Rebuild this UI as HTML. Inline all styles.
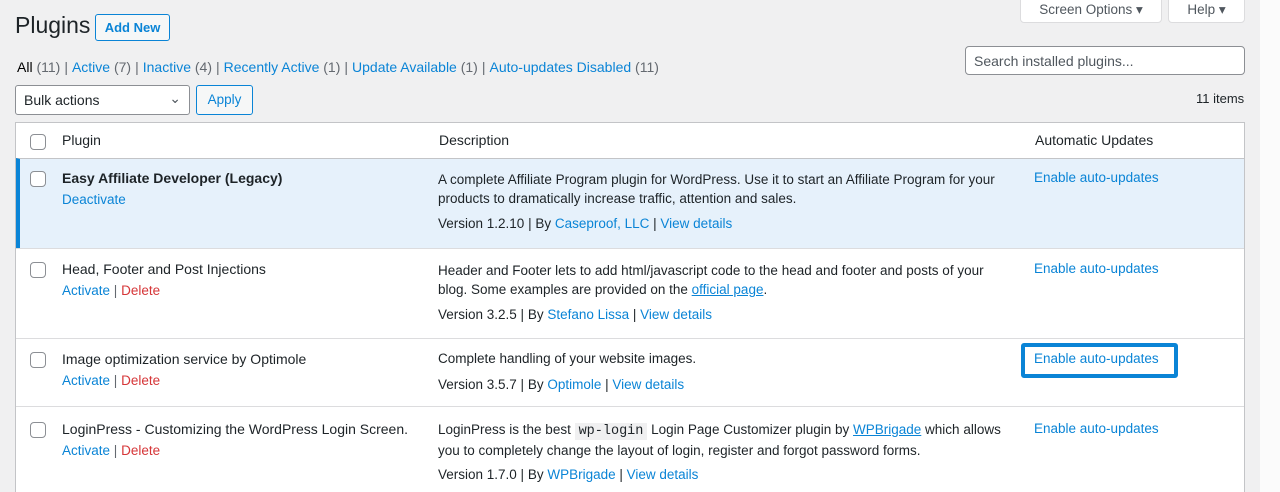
<!DOCTYPE html>
<html style="overflow:hidden"><head><meta charset="utf-8"><style>
*{box-sizing:border-box;margin:0;padding:0}
html,body{width:1280px;height:492px;overflow:hidden}
body{background:#f0f0f1;font-family:"Liberation Sans",sans-serif;font-size:13.5px;color:#1d2327;position:relative}
.a{position:absolute;white-space:nowrap}
.b{color:#0a84d6}
.g{color:#646970}
.r{color:#d63638}
.rightstrip{position:absolute;left:1260px;top:0;width:20px;height:492px;background:#fbfbfb}
.btn{position:absolute;border:1px solid #0a84d6;border-radius:3px;color:#0a84d6;background:#f6f7f7;font-size:13.5px;text-align:center}
.tb{position:absolute;left:15px;top:122px;width:1230px;height:380px;background:#fff;border:1px solid #c3c4c7}
.row{position:absolute;left:0;width:1228px;border-top:1px solid #dcdcde}
.cb{position:absolute;width:16px;height:16px;border:1px solid #8c8f94;border-radius:4px;background:#fff}
.f span.s{color:#646970;margin:0 4px}
</style></head><body>
<div class="rightstrip"></div>
<div class="a" style="left:15px;top:12px;font-size:23px;color:#1d2327">Plugins</div>
<div class="btn" style="left:95px;top:14px;width:75px;height:27px;line-height:25px;font-weight:bold;font-size:13px">Add New</div>
<div class="a" style="left:1020px;top:-6px;width:142px;height:29px;background:#fff;border:1px solid #dcdcde;border-radius:0 0 4px 4px;text-align:center;line-height:28px;color:#50575e;padding-top:1px">Screen Options ▾</div>
<div class="a" style="left:1168px;top:-6px;width:77px;height:29px;background:#fff;border:1px solid #dcdcde;border-radius:0 0 4px 4px;text-align:center;line-height:28px;color:#50575e;padding-top:1px">Help ▾</div>
<div class="a f" style="left:17px;top:59px;font-size:14px"><span style="color:#000">All</span> <span class="g">(11)</span><span class="s">|</span><span class="b">Active</span> <span class="g">(7)</span><span class="s">|</span><span class="b">Inactive</span> <span class="g">(4)</span><span class="s">|</span><span class="b">Recently Active</span> <span class="g">(1)</span><span class="s">|</span><span class="b">Update Available</span> <span class="g">(1)</span><span class="s">|</span><span class="b">Auto-updates Disabled</span> <span class="g">(11)</span></div>
<div class="a" style="left:965px;top:46px;width:280px;height:29px;background:#fff;border:1px solid #8c8f94;border-radius:4px;padding:6px 8px;color:#50575e;font-size:14px">Search installed plugins...</div>
<div class="a" style="left:15px;top:85px;width:175px;height:30px;background:#fff;border:1px solid #8c8f94;border-radius:3px;padding:6px 8px;font-size:14px">Bulk actions<span style="position:absolute;right:8px;top:4px;color:#50575e">⌄</span></div>
<div class="btn" style="left:196px;top:85px;width:57px;height:30px;line-height:28px">Apply</div>
<div class="a" style="left:1196px;top:91px;color:#1d2327;font-size:13px">11 items</div>
<div class="tb">
 <div class="cb" style="left:14px;top:11px"></div>
 <div class="a" style="left:46px;top:9px;font-size:14px">Plugin</div>
 <div class="a" style="left:423px;top:9px;font-size:14px">Description</div>
 <div class="a" style="left:1019px;top:9px;font-size:14px">Automatic Updates</div>
 <div class="row" style="top:35px;height:90px;background:#e6f1fb;border-left:4px solid #0a84d6;border-top-color:#c3c4c7">
  <div class="cb" style="left:10px;top:12px"></div>
  <div class="a" style="left:42px;top:11px;font-weight:bold;font-size:14px">Easy Affiliate Developer (Legacy)</div>
  <div class="a b" style="left:42px;top:33px">Deactivate</div>
  <div class="a" style="left:418px;top:11px;line-height:19px">A complete Affiliate Program plugin for WordPress. Use it to start an Affiliate Program for your<br>products to dramatically increase traffic, attention and sales.</div>
  <div class="a" style="left:418px;top:57px">Version 1.2.10 | By <span class="b">Caseproof, LLC</span> | <span class="b">View details</span></div>
  <div class="a b" style="left:1014px;top:11px">Enable auto-updates</div>
 </div>
 <div class="row" style="top:125px;height:90px">
  <div class="cb" style="left:14px;top:13px"></div>
  <div class="a" style="left:46px;top:12px;font-size:14px">Head, Footer and Post Injections</div>
  <div class="a" style="left:46px;top:34px"><span class="b">Activate</span> <span class="g">|</span> <span class="r">Delete</span></div>
  <div class="a" style="left:422px;top:12px;line-height:19px">Header and Footer lets to add html/javascript code to the head and footer and posts of your<br>blog. Some examples are provided on the <span class="b" style="text-decoration:underline">official page</span>.</div>
  <div class="a" style="left:422px;top:58px">Version 3.2.5 | By <span class="b">Stefano Lissa</span> | <span class="b">View details</span></div>
  <div class="a b" style="left:1018px;top:12px">Enable auto-updates</div>
 </div>
 <div class="row" style="top:215px;height:68px">
  <div class="cb" style="left:14px;top:13px"></div>
  <div class="a" style="left:46px;top:12px;font-size:14px">Image optimization service by Optimole</div>
  <div class="a" style="left:46px;top:34px"><span class="b">Activate</span> <span class="g">|</span> <span class="r">Delete</span></div>
  <div class="a" style="left:422px;top:12px">Complete handling of your website images.</div>
  <div class="a" style="left:422px;top:38px">Version 3.5.7 | By <span class="b">Optimole</span> | <span class="b">View details</span></div>
  <div class="a b" style="left:1005px;top:4px;width:157px;height:35px;border:4px solid #0a84d6;border-radius:3px;padding:4px 0 0 9px">Enable auto-updates</div>
 </div>
 <div class="row" style="top:283px;height:110px">
  <div class="cb" style="left:14px;top:15px"></div>
  <div class="a" style="left:46px;top:14px;font-size:14px">LoginPress - Customizing the WordPress Login Screen.</div>
  <div class="a" style="left:46px;top:36px"><span class="b">Activate</span> <span class="g">|</span> <span class="r">Delete</span></div>
  <div class="a" style="left:422px;top:13px;line-height:19px">LoginPress is the best <span style="font-family:'Liberation Mono',monospace;background:#f0f0f1;padding:1px 4px">wp-login</span> Login Page Customizer plugin by <span class="b" style="text-decoration:underline">WPBrigade</span> which allows<br>you to completely change the layout of login, register and forgot password forms.</div>
  <div class="a" style="left:422px;top:60px">Version 1.7.0 | By <span class="b">WPBrigade</span> | <span class="b">View details</span></div>
  <div class="a b" style="left:1018px;top:14px">Enable auto-updates</div>
 </div>
</div>
</body></html>
